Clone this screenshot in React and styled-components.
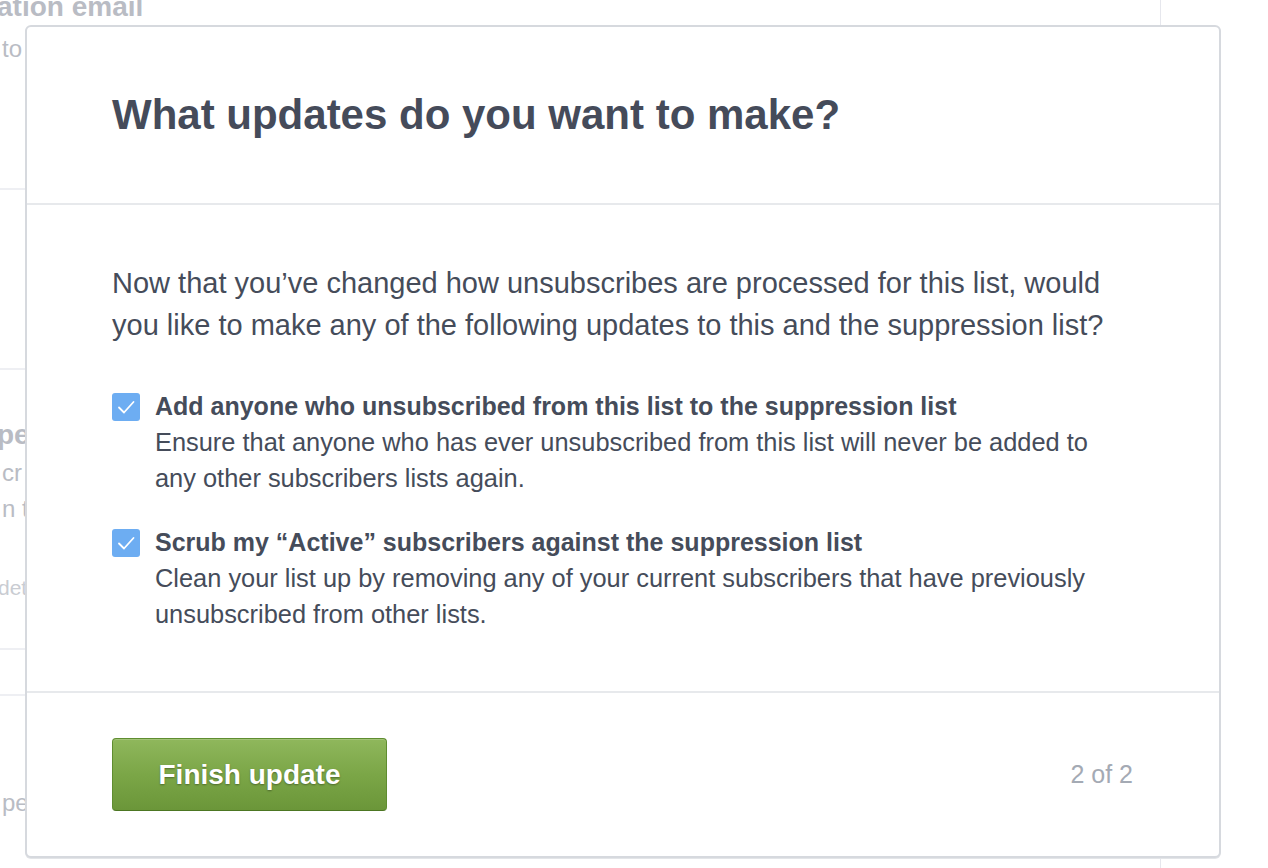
import React from "react";
import styled, { createGlobalStyle } from "styled-components";

const GlobalStyle = createGlobalStyle`
  html, body {
    margin: 0;
    padding: 0;
    background: #ffffff;
    font-family: "Liberation Sans", Arial, Helvetica, sans-serif;
    -webkit-font-smoothing: antialiased;
  }
`;

const items = [
  {
    title: "Add anyone who unsubscribed from this list to the suppression list",
    text: "Ensure that anyone who has ever unsubscribed from this list will never be added to any other subscribers lists again.",
  },
  {
    title: "Scrub my \u201CActive\u201D subscribers against the suppression list",
    text: "Clean your list up by removing any of your current subscribers that have previously unsubscribed from other lists.",
  },
];

function Check() {
  return (
    <CheckBox>
      <svg width="28" height="28" viewBox="0 0 28 28">
        <path d="M7 14.5 L12 19.5 L21.5 9" fill="none" stroke="#fff" strokeWidth="1.8" strokeLinecap="round" strokeLinejoin="round" />
      </svg>
    </CheckBox>
  );
}

export default function App() {
  return (
    <>
      <GlobalStyle />
      <Screen>
        <Page>
          <Section $h={190}>
            <FadedHeading>ation email</FadedHeading>
            <FadedLine $top={10}>to</FadedLine>
          </Section>
          <Section $h={180} />
          <Section $h={280}>
            <FadedHeading $top={48}>pe</FadedHeading>
            <FadedLine $top={6}>cr</FadedLine>
            <FadedLine $top={6}>n t</FadedLine>
            <FadedSmall $top={50}>det</FadedSmall>
          </Section>
          <Section $h={46} />
          <Section $h={172} $last>
            <FadedLine $top={92}>pe</FadedLine>
          </Section>
        </Page>

        <Modal>
          <Header>
            <Title>What updates do you want to make?</Title>
          </Header>
          <Body>
            <Lead>
              Now that you’ve changed how unsubscribes are processed for this list, would
              you like to make any of the following updates to this and the suppression list?
            </Lead>
            <Options>
              {items.map((it) => (
                <Option key={it.title}>
                  <Check />
                  <OptionText>
                    <OptionTitle>{it.title}</OptionTitle>
                    <OptionDesc>{it.text}</OptionDesc>
                  </OptionText>
                </Option>
              ))}
            </Options>
          </Body>
          <Footer>
            <FinishButton>Finish update</FinishButton>
            <Step>2 of 2</Step>
          </Footer>
        </Modal>
      </Screen>
    </>
  );
}

const Screen = styled.div`
  position: relative;
  width: 1268px;
  height: 868px;
  overflow: hidden;
  background: #ffffff;
`;

const Page = styled.div`
  width: 1160px;
  height: 868px;
  border-right: 1px solid #e6e7ed;
  display: flex;
  flex-direction: column;
  overflow: hidden;
`;

const Section = styled.div`
  height: ${(p) => p.$h}px;
  flex-shrink: 0;
  box-sizing: border-box;
  border-bottom: ${(p) => (p.$last ? "none" : "2px solid #eeeff3")};
  display: flex;
  flex-direction: column;
  color: #b9bcc4;
`;

const FadedHeading = styled.div`
  margin-top: ${(p) => (p.$top ? p.$top : -10)}px;
  margin-left: -3px;
  font-size: 28px;
  font-weight: bold;
  line-height: 34px;
  white-space: nowrap;
`;

const FadedLine = styled.div`
  margin-top: ${(p) => p.$top}px;
  margin-left: 2px;
  font-size: 24px;
  line-height: 30px;
  white-space: nowrap;
`;

const FadedSmall = styled.div`
  margin-top: ${(p) => p.$top}px;
  margin-left: -2px;
  font-size: 21px;
  line-height: 28px;
  color: #c9ccd2;
  white-space: nowrap;
`;

const Modal = styled.div`
  position: absolute;
  left: 25px;
  top: 25px;
  width: 1196px;
  box-sizing: border-box;
  background: #ffffff;
  border: 2px solid #d6d9de;
  border-radius: 6px;
  box-shadow: 0 1px 0 #e3e5e8;
  display: flex;
  flex-direction: column;
  color: #454c5a;
`;

const Header = styled.div`
  padding: 63px 85px 63px;
  border-bottom: 2px solid #e7e9ec;
`;

const Title = styled.h1`
  margin: 0;
  font-size: 42px;
  line-height: 50px;
  font-weight: bold;
  color: #454b5a;
`;

const Body = styled.div`
  padding: 57px 85px 59px;
  border-bottom: 2px solid #e7e9ec;
`;

const Lead = styled.p`
  margin: 0;
  font-size: 29px;
  line-height: 42px;
  max-width: 1010px;
`;

const Options = styled.div`
  margin-top: 42px;
  display: flex;
  flex-direction: column;
  gap: 28px;
`;

const Option = styled.div`
  display: flex;
  align-items: flex-start;
  gap: 15px;
`;

const CheckBox = styled.span`
  flex-shrink: 0;
  width: 28px;
  height: 28px;
  margin-top: 5px;
  border-radius: 3px;
  background: #6dadf2;
  display: flex;
  align-items: center;
  justify-content: center;
`;

const OptionText = styled.div`
  display: flex;
  flex-direction: column;
  max-width: 960px;
`;

const OptionTitle = styled.div`
  font-size: 25px;
  line-height: 36px;
  font-weight: bold;
`;

const OptionDesc = styled.div`
  font-size: 25.4px;
  line-height: 36px;
`;

const Footer = styled.div`
  padding: 45px 86px 45px 85px;
  display: flex;
  align-items: center;
  justify-content: space-between;
`;

const FinishButton = styled.button`
  width: 275px;
  height: 73px;
  box-sizing: border-box;
  border: 1px solid #5f8d30;
  border-bottom-color: #4c7622;
  border-radius: 4px;
  background: linear-gradient(to bottom, #8fb75c 0%, #7ba647 50%, #6b9639 100%);
  box-shadow: inset 0 1px 0 rgba(255, 255, 255, 0.18);
  color: #ffffff;
  font-family: "Liberation Sans", Arial, Helvetica, sans-serif;
  font-size: 28px;
  font-weight: bold;
  text-shadow: 0 1px 2px rgba(0, 0, 0, 0.35);
  cursor: pointer;
  padding: 0;
`;

const Step = styled.div`
  font-size: 25px;
  color: #a4aab4;
`;
